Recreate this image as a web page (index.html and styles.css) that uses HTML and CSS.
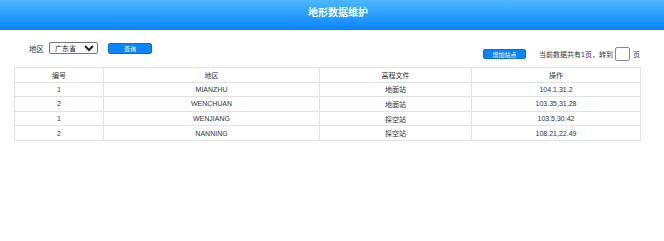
FILE: index.html
```html
<!DOCTYPE html>
<html lang="zh">
<head>
    <meta charset="UTF-8">
    <meta name="viewport" content="width=device-width, initial-scale=1.0">
    <title>地形数据维护</title>
    <link rel="stylesheet" href="styles.css">
</head>
<body>

<header>
    <h1>地形数据维护</h1>
</header>

<div class="toolbar">
    <div class="search">
        <label for="area">地区</label>
        <select id="area">
            <option>广东省</option>
            <option>四川省</option>
            <option>广西省</option>
        </select>
        <button class="btn btn-query">查询</button>
    </div>
    <div class="pager">
        <button class="btn btn-add">增加站点</button>
        <span class="pager-text">当前数据共有1页，转到</span>
        <input type="text" class="page-input">
        <span>页</span>
    </div>
</div>

<table>
    <colgroup>
        <col style="width: 89px">
        <col style="width: 216px">
        <col style="width: 152px">
        <col style="width: 169px">
    </colgroup>
    <tr>
        <th>编号</th>
        <th>地区</th>
        <th>高程文件</th>
        <th>操作</th>
    </tr>
    <tr>
        <td>1</td>
        <td>MIANZHU</td>
        <td>地面站</td>
        <td>104.1,31.2</td>
    </tr>
    <tr>
        <td>2</td>
        <td>WENCHUAN</td>
        <td>地面站</td>
        <td>103.35,31.28</td>
    </tr>
    <tr>
        <td>1</td>
        <td>WENJIANG</td>
        <td>探空站</td>
        <td>103.5,30.42</td>
    </tr>
    <tr>
        <td>2</td>
        <td>NANNING</td>
        <td>探空站</td>
        <td>108.21,22.49</td>
    </tr>
</table>

</body>
</html>
```

FILE: styles.css
```css
body {
    font-family: "Liberation Sans", "Noto Sans CJK SC", sans-serif;
    margin: 0;
    padding: 0;
    background-color: #fff;
    color: #333;
    font-size: 7px;
}

header {
    height: 30px;
    background: linear-gradient(to bottom, #4db8ff, #0a86ff);
    border-bottom: 1px solid #0a7df0;
    box-sizing: border-box;
    text-align: center;
}

header h1 {
    margin: 0;
    padding-left: 12px;
    font-size: 10px;
    line-height: 25px;
    color: white;
    font-weight: bold;
}

.toolbar {
    display: flex;
    justify-content: space-between;
    align-items: flex-start;
    margin-top: 12px;
    padding: 0 24px 0 29px;
}

.search {
    display: flex;
    align-items: center;
    height: 12px;
}

.search label {
    margin-right: 5px;
    font-size: 7.5px;
}

select {
    width: 49px;
    height: 12px;
    padding: 0 1px;
    font-size: 7px;
    font-family: inherit;
    border: 1px solid #767676;
    border-radius: 2px;
    background-color: #fff;
    color: #222;
}

.btn {
    background-color: #0a84ff;
    color: white;
    border: 1px solid #0a6cd6;
    border-radius: 2px;
    font-size: 6px;
    font-family: inherit;
    padding: 0;
    cursor: pointer;
}

.btn-query {
    width: 44px;
    height: 11px;
    margin-left: 10px;
}

.pager {
    display: flex;
    align-items: center;
    margin-top: 5px;
    height: 14px;
}

.btn-add {
    width: 43px;
    height: 10px;
    margin-right: 13px;
}

.page-input {
    width: 15px;
    height: 14px;
    box-sizing: border-box;
    margin: 0 3px 0 2px;
    padding: 0;
    border: 1px solid #888;
    border-radius: 2px;
}

table {
    width: 626px;
    border-collapse: collapse;
    margin: 6px 0 0 14px;
    table-layout: fixed;
}

th, td {
    border: 1px solid #e2e2e2;
    padding: 0;
    height: 13.6px;
    text-align: center;
    font-weight: normal;
    font-size: 7px;
}
```
